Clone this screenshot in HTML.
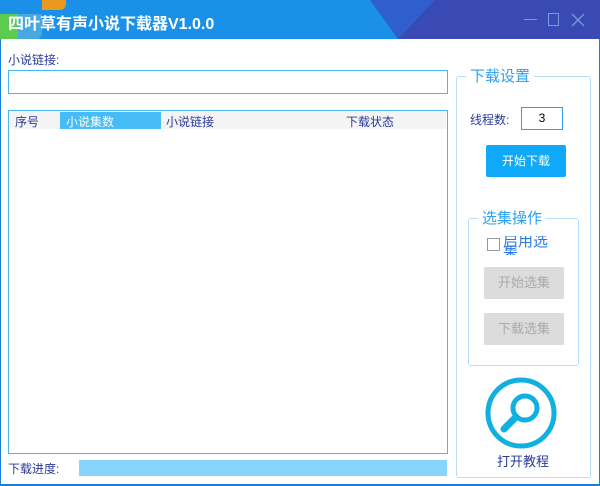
<!DOCTYPE html>
<html><head><meta charset="utf-8"><style>
*{margin:0;padding:0;box-sizing:border-box}
body{width:600px;height:486px;overflow:hidden;background:#fff;font-family:"Liberation Sans","Noto Sans CJK SC",sans-serif;font-size:12px;position:relative}
.a{position:absolute}
.lbl{color:#2a3a9a}
</style></head><body>
<div class="a" style="left:0;top:0;width:600px;height:486px;border:1px solid #1a7fd8;border-top:none;border-bottom:2px solid #1a7fd8"></div>
<div class="a" style="left:0;top:0;width:600px;height:39px;background:#1a90e8;overflow:hidden">
 <div class="a" style="left:42px;top:0;width:24px;height:10px;background:#e89a20;border-radius:0 0 6px 0"></div>
 <div class="a" style="left:0;top:14px;width:18px;height:25px;background:#5ccc50"></div>
 <div class="a" style="left:18px;top:14px;width:24px;height:25px;background:#4aa8e0;border-radius:0 0 6px 0"></div>
 <svg class="a" style="left:0;top:0" width="600" height="39"><polygon points="370,0 600,0 600,39 398,39" fill="#2e5fcc"/><polygon points="435,0 600,0 600,39 398,39" fill="#3a4ab4"/></svg>
 <div class="a" style="left:8px;top:10px;color:#fff;font-size:16px;font-weight:bold">四叶草有声小说下载器V1.0.0</div>
 <div class="a" style="left:524px;top:19px;width:13px;height:1px;background:#7d9ad8"></div>
 <div class="a" style="left:548px;top:13px;width:11px;height:13px;border:1px solid #7d9ad8"></div>
 <svg class="a" style="left:571px;top:13px" width="14" height="14"><path d="M1 1L13 13M13 1L1 13" stroke="#7d9ad8" stroke-width="1.3"/></svg>
</div>
<div class="a lbl" style="left:8px;top:51px">小说链接:</div>
<div class="a" style="left:8px;top:70px;width:440px;height:24px;border:1px solid #40b8f0"></div>
<div class="a" style="left:8px;top:110px;width:440px;height:344px;border:1px solid #40b8f0">
 <div class="a" style="left:1px;top:1px;width:436px;height:17px;background:#f4f4f4"></div>
 <div class="a" style="left:51px;top:1px;width:101px;height:17px;background:#45bcf5"></div>
 <div class="a" style="left:6px;top:2px;color:#2a3a9a">序号</div>
 <div class="a" style="left:57px;top:2px;color:#fff">小说集数</div>
 <div class="a" style="left:157px;top:2px;color:#2a3a9a">小说链接</div>
 <div class="a" style="left:337px;top:2px;color:#2a3a9a">下载状态</div>
</div>
<div class="a lbl" style="left:8px;top:460px">下载进度:</div>
<div class="a" style="left:79px;top:460px;width:368px;height:16px;background:#88d4fb"></div>
<div class="a" style="left:456px;top:76px;width:135px;height:402px;border:1px solid #b8def5;border-radius:3px"></div>
<div class="a" style="left:466px;top:65px;padding:0 4px;background:#fff;color:#2aa0ee;font-size:15px">下载设置</div>
<div class="a lbl" style="left:470px;top:111px">线程数:</div>
<div class="a" style="left:521px;top:107px;width:42px;height:23px;border:1px solid #2aa0ee;text-align:center;line-height:21px">3</div>
<div class="a" style="left:486px;top:145px;width:80px;height:32px;background:#10a8f8;color:#fff;text-align:center;line-height:32px;border-radius:2px">开始下载</div>
<div class="a" style="left:468px;top:218px;width:111px;height:148px;border:1px solid #b8def5;border-radius:3px"></div>
<div class="a" style="left:478px;top:207px;padding:0 4px;background:#fff;color:#2aa0ee;font-size:15px">选集操作</div>
<div class="a" style="left:487px;top:238px;width:13px;height:13px;border:1px solid #999"></div>
<div class="a" style="left:503px;top:236px;width:50px;height:12px;overflow:hidden;color:#2a7ae0;font-size:15px;line-height:12px">启用选</div>
<div class="a" style="left:503px;top:246px;color:#2a7ae0;font-size:15px;line-height:10px;height:9px;overflow:hidden">集</div>
<div class="a" style="left:484px;top:267px;width:80px;height:32px;background:#dcdcdc;color:#aaa;text-align:center;line-height:32px;border-radius:2px;font-size:13px">开始选集</div>
<div class="a" style="left:484px;top:313px;width:80px;height:32px;background:#dcdcdc;color:#aaa;text-align:center;line-height:32px;border-radius:2px;font-size:13px">下载选集</div>
<svg class="a" style="left:484px;top:377px" width="76" height="76"><circle cx="37" cy="36" r="33" fill="none" stroke="#10b0e0" stroke-width="5"/><circle cx="41" cy="31" r="12" fill="none" stroke="#10b0e0" stroke-width="5"/><path d="M32 40L20 52" stroke="#10b0e0" stroke-width="7" stroke-linecap="round"/></svg>
<div class="a" style="left:497px;top:451px;color:#2a3a9a;font-size:13px">打开教程</div>
</body></html>
